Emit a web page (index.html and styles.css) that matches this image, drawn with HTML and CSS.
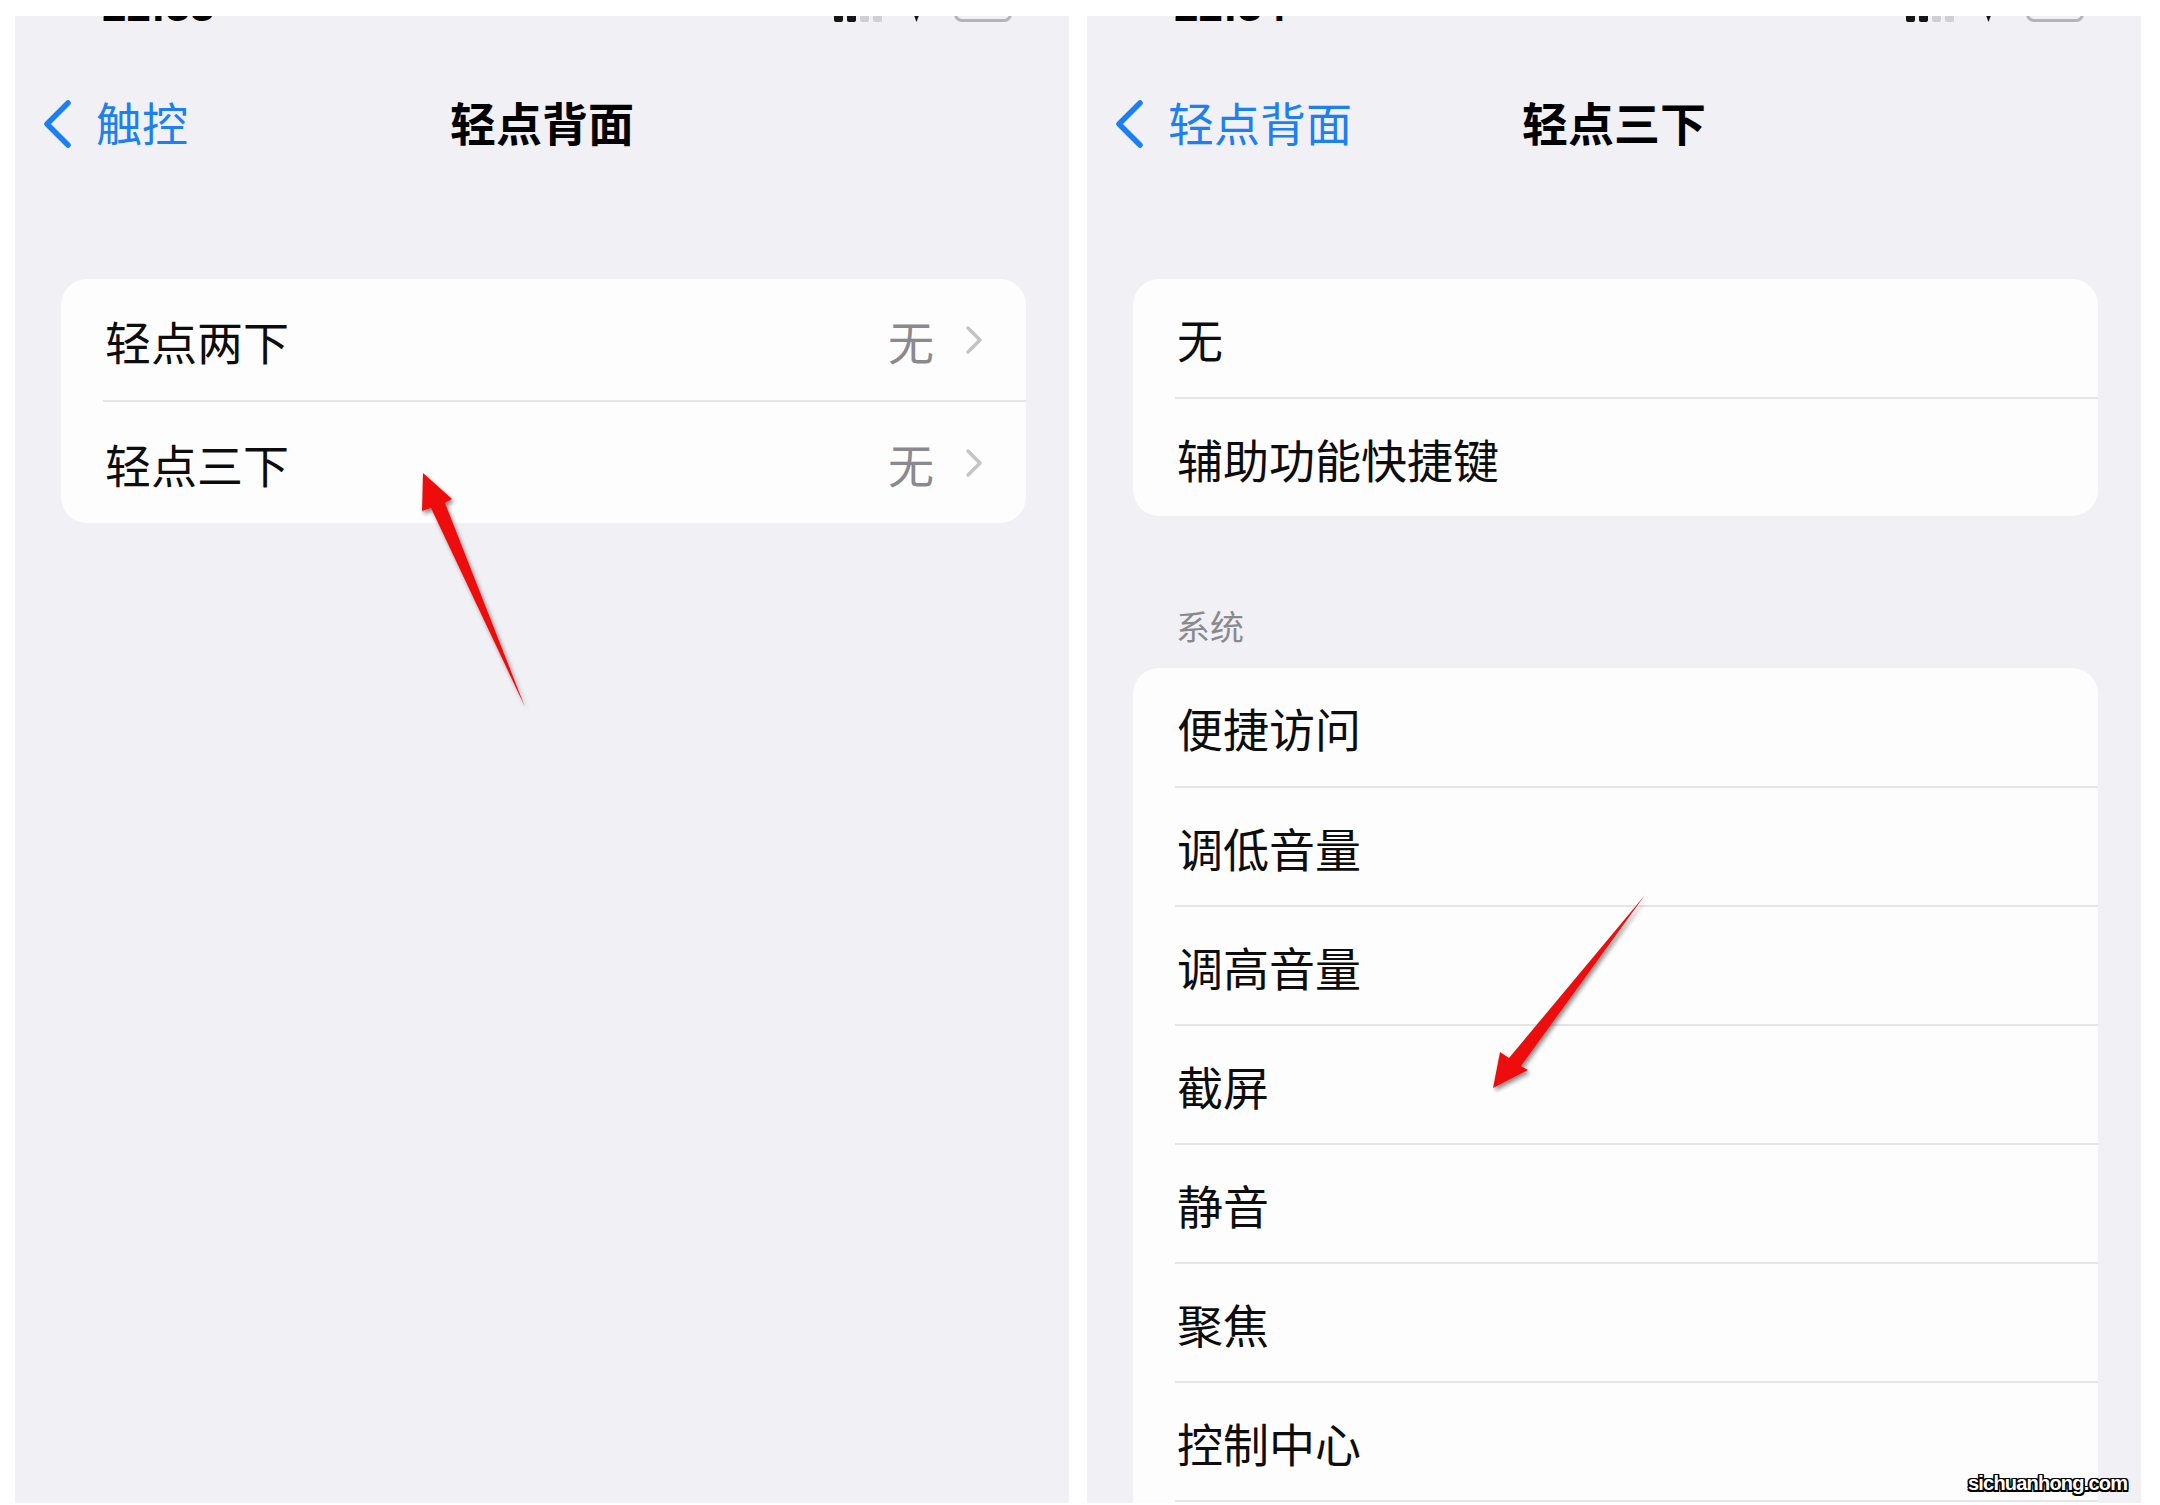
FILE: index.html
```html
<!DOCTYPE html>
<html lang="zh-CN">
<head>
<meta charset="utf-8">
<title>轻点背面</title>
<link rel="stylesheet" href="styles.css">
</head>
<body>
<div class="page">
  <section class="panel">
    <div class="status">
      <span class="time">22:33</span>
      <span class="spacer"></span>
      <span class="signal"><i class="on"></i><i class="on"></i><i></i><i></i></span>
      <span class="wifi"></span>
      <span class="battery"></span>
    </div>
    <nav class="nav">
      <a class="back">
        <svg class="back-chev" viewBox="0 0 30 48"><path d="M26 3 L5 24 L26 45" fill="none" stroke="currentColor" stroke-width="5.5" stroke-linecap="round" stroke-linejoin="round"/></svg>
        <span>触控</span>
      </a>
      <h1 class="title">轻点背面</h1>
    </nav>
    <div class="card card-lg">
      <div class="row"><span class="label">轻点两下</span><span class="value">无</span><svg class="chev" viewBox="0 0 18 30"><path d="M3 3 L15 15 L3 27" fill="none" stroke="currentColor" stroke-width="3.5" stroke-linecap="round" stroke-linejoin="round"/></svg></div>
      <div class="row"><span class="label">轻点三下</span><span class="value">无</span><svg class="chev" viewBox="0 0 18 30"><path d="M3 3 L15 15 L3 27" fill="none" stroke="currentColor" stroke-width="3.5" stroke-linecap="round" stroke-linejoin="round"/></svg></div>
    </div>
  </section>

  <section class="panel">
    <div class="status">
      <span class="time">22:34</span>
      <span class="spacer"></span>
      <span class="signal"><i class="on"></i><i class="on"></i><i></i><i></i></span>
      <span class="wifi"></span>
      <span class="battery"></span>
    </div>
    <nav class="nav">
      <a class="back">
        <svg class="back-chev" viewBox="0 0 30 48"><path d="M26 3 L5 24 L26 45" fill="none" stroke="currentColor" stroke-width="5.5" stroke-linecap="round" stroke-linejoin="round"/></svg>
        <span>轻点背面</span>
      </a>
      <h1 class="title">轻点三下</h1>
    </nav>
    <div class="card">
      <div class="row"><span class="label">无</span></div>
      <div class="row"><span class="label">辅助功能快捷键</span></div>
    </div>
    <div class="section-title">系统</div>
    <div class="card card-sys">
      <div class="row"><span class="label">便捷访问</span></div>
      <div class="row"><span class="label">调低音量</span></div>
      <div class="row"><span class="label">调高音量</span></div>
      <div class="row"><span class="label">截屏</span></div>
      <div class="row"><span class="label">静音</span></div>
      <div class="row"><span class="label">聚焦</span></div>
      <div class="row"><span class="label">控制中心</span></div>
      <div class="row"></div>
    </div>
  </section>
</div>

<svg class="arrows" viewBox="0 0 2160 1505">
  <defs>
    <filter id="shadow" x="-20%" y="-20%" width="140%" height="140%">
      <feDropShadow dx="2" dy="3" stdDeviation="2" flood-color="#000" flood-opacity="0.45"/>
    </filter>
  </defs>
  <polygon points="423,473 452,499 445,503 525,707 431,508 422,511" fill="#ee1111" filter="url(#shadow)"/>
  <polygon points="1493,1088 1500,1052 1509,1058 1645,895 1521,1066 1528,1070" fill="#ee1111" filter="url(#shadow)"/>
</svg>

<div class="watermark">sichuanhong.com</div>
</body>
</html>
```

FILE: styles.css
```css
* {
  box-sizing: border-box;
  margin: 0;
  padding: 0;
}

html, body {
  background: #ffffff;
}

body {
  width: 2160px;
  height: 1505px;
  overflow: hidden;
  position: relative;
  font-family: "Noto Sans CJK SC", "Noto Sans", sans-serif;
}

.page {
  display: flex;
  gap: 18px;
  height: 1503px;
  padding: 16px 19px 0 15px;
}

.panel {
  flex: 1;
  background: #f0f0f5;
  overflow: hidden;
}

/* status bar – only its bottom edge is visible */
.status {
  display: flex;
  align-items: flex-end;
  height: 40px;
  margin-top: -34px;
  padding: 0 57px 0 87px;
}

.time {
  font-family: "Liberation Sans", sans-serif;
  font-weight: 700;
  font-size: 44px;
  line-height: 32px;
  height: 32px;
  color: #000;
}

.spacer {
  flex: 1;
}

.signal {
  display: flex;
  align-items: flex-end;
  gap: 4px;
  margin-right: 30px;
}

.signal i {
  display: block;
  width: 9px;
  height: 20px;
  border-radius: 2px;
  background: #cfcfd4;
}

.signal i.on {
  background: #151515;
}

.wifi {
  width: 9px;
  height: 12px;
  background: #151515;
  clip-path: polygon(0 0, 100% 0, 50% 100%);
  margin-right: 33px;
}

.battery {
  width: 58px;
  height: 26px;
  border: 3px solid #b4b4b8;
  border-radius: 8px;
}

/* navigation bar */
.nav {
  display: grid;
  grid-template-columns: 1fr auto 1fr;
  align-items: center;
  height: 60px;
  margin-top: 69px;
}

.back {
  display: flex;
  align-items: center;
  gap: 24px;
  padding-left: 27px;
  color: #1c7ff2;
  font-size: 46px;
  line-height: 60px;
  white-space: nowrap;
}

.back-chev {
  display: block;
  width: 30px;
  height: 48px;
  margin-top: 6px;
}

.title {
  grid-column: 2;
  font-size: 46px;
  font-weight: 700;
  line-height: 60px;
  color: #000;
  white-space: nowrap;
}

/* grouped list */
.card {
  background: #fdfdfd;
  border-radius: 26px;
  margin: 128px 43px 0 46px;
  overflow: hidden;
}

.card-sys {
  margin-top: 0;
}

.row {
  display: flex;
  align-items: center;
  height: 118px;
  margin-left: 42px;
  padding: 0 43px 0 2px;
  font-size: 46px;
  color: #0d0d0d;
  white-space: nowrap;
}

.row + .row {
  height: 119px;
  border-top: 2px solid #e5e5e8;
}

.card-lg .row {
  height: 121px;
}

.card-lg .row + .row {
  height: 123px;
}

.label {
  flex: 1;
}

.value {
  color: #8a8a8e;
}

.chev {
  display: block;
  width: 18px;
  height: 30px;
  margin-left: 31px;
  color: #c4c4c7;
}

.section-title {
  margin: 85px 0 17px 89px;
  font-size: 34px;
  line-height: 50px;
  color: #8a8a8e;
}

/* annotation overlays */
.arrows {
  position: absolute;
  top: 0;
  left: 0;
  width: 2160px;
  height: 1505px;
  pointer-events: none;
}

.watermark {
  position: absolute;
  left: 1968px;
  top: 1472px;
  font-family: "Liberation Sans", sans-serif;
  font-weight: 700;
  font-size: 20px;
  letter-spacing: -0.8px;
  color: #ffffff;
  text-shadow: -1.5px -1.5px 0 #000, 1.5px -1.5px 0 #000, -1.5px 1.5px 0 #000, 1.5px 1.5px 0 #000, 0 1.5px 0 #000, 0 -1.5px 0 #000, 1.5px 0 0 #000, -1.5px 0 0 #000;
}
```
